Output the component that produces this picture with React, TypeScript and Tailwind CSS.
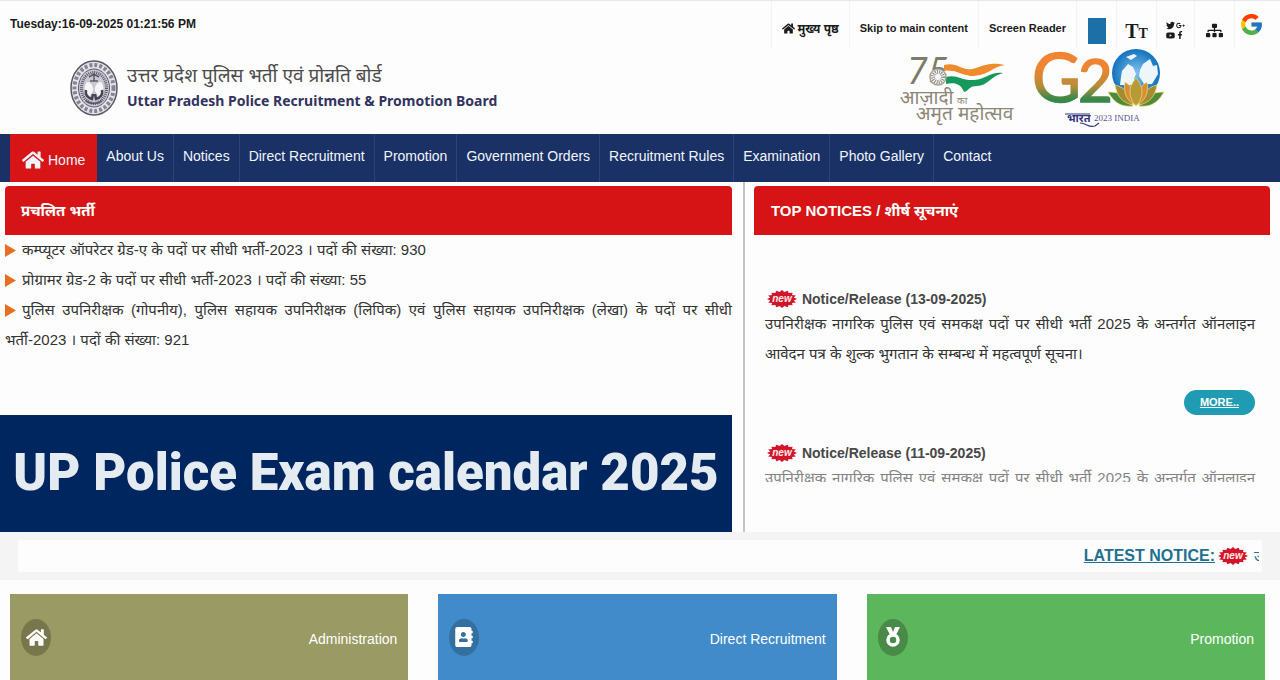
import { FaAddressBook, FaFacebookF, FaGooglePlusG, FaHome, FaSitemap, FaTwitter, FaYoutube } from "react-icons/fa";
import { FcGoogle } from "react-icons/fc";

const NAV_LINKS = [
  "About Us",
  "Notices",
  "Direct Recruitment",
  "Promotion",
  "Government Orders",
  "Recruitment Rules",
  "Examination",
  "Photo Gallery",
  "Contact",
];

const VACANCIES = [
  "कम्प्यूटर ऑपरेटर ग्रेड-ए के पदों पर सीधी भर्ती-2023 । पदों की संख्या: 930",
  "प्रोग्रामर ग्रेड-2 के पदों पर सीधी भर्ती-2023 । पदों की संख्या: 55",
  "पुलिस उपनिरीक्षक (गोपनीय), पुलिस सहायक उपनिरीक्षक (लिपिक) एवं पुलिस सहायक उपनिरीक्षक (लेखा) के पदों पर सीधी भर्ती-2023 । पदों की संख्या: 921",
];

function NewBadge() {
  // 16-point starburst
  const points = Array.from({ length: 32 }, (_, i) => {
    const r = i % 2 === 0 ? 1 : 0.8;
    const a = (i * Math.PI) / 16;
    return `${15 + 15 * r * Math.cos(a)},${9 + 9 * r * Math.sin(a)}`;
  }).join(" ");
  return (
    <svg viewBox="0 0 30 18" className="h-[18px] w-[30px] shrink-0">
      <polygon points={points} fill="#d3152b" />
      <text x="15" y="12" textAnchor="middle" fontSize="10" fontStyle="italic" fontWeight="700" fill="#ffe9e4">
        new
      </text>
    </svg>
  );
}

function Seal() {
  return (
    <svg viewBox="0 0 48 56" className="h-14 w-12 shrink-0" fill="none" stroke="#5b5a68">
      <ellipse cx="24" cy="28" rx="23" ry="27" fill="#e4e3ea" strokeWidth="1.5" />
      <ellipse cx="24" cy="28" rx="19.5" ry="23" strokeWidth="4" strokeDasharray="3 2" stroke="#858493" />
      <ellipse cx="24" cy="28" rx="15.5" ry="19" fill="#c9c8d2" strokeWidth="1" />
      <ellipse cx="24" cy="28" rx="12.5" ry="15.5" strokeWidth="3" strokeDasharray="1 1" />
      <path d="M24 13v8M19 17l5-3 5 3M20 21h8" strokeWidth="1.5" />
      <path d="M17 22c-4 5-3 11 3 14l3-5c1-4-2-9-6-9zM31 22c4 5 3 11-3 14l-3-5c-1-4 2-9 6-9z" fill="#f6f6fa" stroke="none" />
      <path d="M16 30c-1 5 2 8 6 9l1-5M32 30c1 5-2 8-6 9l-1-5" strokeWidth="2.5" stroke="#454453" />
      <path d="M16 41c5 3 11 3 16 0" strokeWidth="1.5" />
    </svg>
  );
}

function AmritMahotsavLogo() {
  return (
    <svg viewBox="0 0 120 72" className="h-[72px] w-[120px] overflow-visible" role="img" aria-label="आज़ादी का अमृत महोत्सव">
      <text x="7" y="28" fontFamily="Lato, sans-serif" fontSize="36" fontStyle="italic" fill="#7d7b69">75</text>
      <path d="M44 9c14-4 18 8 32 3s18-5 29-3c-14 2-15 10-31 11-13 0-17-7-30-5z" fill="#ef8b2c" />
      <path d="M44 15c13-2 17 5 30 5 13-1 17-8 28-6-12 3-15 9-28 10-13 0-17-6-30-4z" fill="#fafafa" />
      <path d="M46 21c11-3 16 4 28 3 13-1 17-9 29-7-12 3-16 13-26 13-9 0-8 5-13 6-3-8-9-10-18-8z" fill="#15985a" />
      <circle cx="38" cy="21" r="8" fill="#f7f7f5" stroke="#a5a398" strokeWidth="1.5" />
      <circle cx="38" cy="21" r="5" fill="none" stroke="#8f8d8c" strokeWidth="4" strokeDasharray="1 1" />
      <text x="0" y="48" fontSize="19" fill="#8d8778">आज़ादी</text>
      <text x="57" y="48" fontSize="10" fill="#8d8778">का</text>
      <text x="16" y="64" fontSize="19" fill="#8d8778">अमृत महोत्सव</text>
    </svg>
  );
}

function G20Logo() {
  return (
    <svg viewBox="0 0 132 82" className="h-[82px] w-[132px] overflow-visible" role="img" aria-label="G20 भारत 2023 INDIA">
      <defs>
        <linearGradient id="tricolour" gradientUnits="userSpaceOnUse" x1="0" y1="4" x2="0" y2="56">
          <stop offset="0.3" stopColor="#ef8432" />
          <stop offset="0.65" stopColor="#b98c38" />
          <stop offset="0.9" stopColor="#39884a" />
        </linearGradient>
        <radialGradient id="globe">
          <stop offset="0" stopColor="#7fc4ee" />
          <stop offset="1" stopColor="#1272bd" />
        </radialGradient>
      </defs>
      <g fontFamily="Lato, sans-serif" fill="url(#tricolour)" stroke="url(#tricolour)" strokeWidth="1.5">
        <text x="-2" y="54" fontSize="67">G</text>
        <text x="44" y="54" fontSize="60">2</text>
      </g>
      <circle cx="102" cy="25" r="24" fill="url(#globe)" />
      <path d="M88 23l6-7 5 3 3 7-2 5 4 6H86l1-8zM106 22l3-6 7-5 3 7 4-1 1 9-6 10h-8l-5-8zM92 9l8-3 3 2-6 4z" fill="#eef6fb" />
      <g stroke="#f3dc7e" strokeWidth="0.7">
        <path d="M74 44c11 0 19 3 25 14-11 1-18-2-25-14zM130 44c-11 0-19 3-25 14 11 1 18-2 25-14z" fill="#4f8a3a" />
        <path d="M81 37c9 2 15 8 18 20-10-2-16-8-18-20zM123 37c-9 2-15 8-18 20 10-2 16-8 18-20z" fill="#a38d34" />
        <path d="M91 34c8 5 11 12 10 23-8-4-12-12-10-23zM113 34c-8 5-11 12-10 23 8-4 12-12 10-23z" fill="#d98d34" />
        <path d="M102 30c8 9 8 19 0 28-8-9-8-19 0-28z" fill="#b59b36" />
      </g>
      <text x="33" y="74" fontSize="11" fontWeight="700" fill="#34347c">भारत</text>
      <path d="M31 66h25M46 75c7 0 8 5 15 3l4-3" fill="none" stroke="#34347c" strokeWidth="1.2" />
      <text x="60" y="73" fontFamily="Liberation Serif, serif" fontSize="9" fill="#55558e">2023 INDIA</text>
    </svg>
  );
}

function MedalIcon() {
  return (
    <svg viewBox="0 0 16 22" className="h-[22px] w-4">
      <path d="M1 1h5l2 5 2-5h5l-4 8H5z" fill="#fff" />
      <circle cx="8" cy="14" r="5" fill="none" stroke="#fff" strokeWidth="3.5" />
    </svg>
  );
}

const CARDS = [
  { label: "Administration", className: "bg-[#9a9a64]", badge: "bg-[#77764c]", icon: <FaHome size={21} /> },
  { label: "Direct Recruitment", className: "bg-[#418bca]", badge: "bg-[#33709f]", icon: <FaAddressBook size={20} /> },
  { label: "Promotion", className: "bg-[#5bb65c]", badge: "bg-[#4a8a48]", icon: <MedalIcon /> },
];

function TopBar() {
  return (
    <div className="flex h-12 items-start justify-between border-t border-gray-200 pl-[10px] pr-3 text-[12px] font-bold text-[#1b1b1b]">
      <time className="pt-[14px] leading-[18px]">Tuesday:16-09-2025 01:21:56 PM</time>
      <div className="flex h-full items-stretch [&>*]:border-l [&>*]:border-gray-100">
        <a href="#home" className="flex items-center gap-[3px] px-[10px] pt-2">
          <FaHome size={13} /> मुख्य पृष्ठ
        </a>
        <a href="#main" className="flex items-center px-[10px] pt-2 text-[11px]">Skip to main content</a>
        <a href="#reader" className="flex items-center px-[10px] pt-2 text-[11px]">Screen Reader</a>
        <div className="flex w-10 items-center justify-center pt-3">
          <button aria-label="Theme colour" className="h-[26px] w-[18px] bg-[#1b70a8]" />
        </div>
        <button className="w-10 pt-3 font-['Liberation_Serif',serif] leading-none" aria-label="Text size">
          <span className="text-[20px]">T</span>
          <span className="text-[14px]">T</span>
        </button>
        <a href="#social" aria-label="Social media" className="grid w-[38px] grid-cols-[9px_9px] content-center justify-center gap-px pt-3">
          <FaTwitter size={9} />
          <FaGooglePlusG size={9} />
          <FaYoutube size={9} />
          <FaFacebookF size={8} />
        </a>
        <a href="#sitemap" aria-label="Sitemap" className="flex w-10 items-center justify-center pt-3">
          <FaSitemap size={17} />
        </a>
        <a href="#translate" aria-label="Translate" className="flex w-[34px] items-center justify-center">
          <FcGoogle size={25} />
        </a>
      </div>
    </div>
  );
}

function Notice({ date, children }: { date: string; children: string }) {
  return (
    <article>
      <h3 className="flex items-center gap-[5px] pl-0.5 text-[14px] font-bold leading-[20px] text-[#484848]">
        <NewBadge /> Notice/Release ({date})
      </h3>
      <p className="text-justify text-[15px] leading-[30px]">{children}</p>
    </article>
  );
}

export default function App() {
  return (
    <div className="bg-[#fdfdfd] font-['Liberation_Sans','Noto_Sans_Devanagari','Noto_Sans',sans-serif] text-[#333]">
      <TopBar />

      <header className="flex h-[86px] items-start justify-between pl-[70px] pr-[114px]">
        <div className="flex items-center gap-[9px] pt-3">
          <Seal />
          <div className="font-['Noto_Sans',sans-serif]">
            <p className="text-[19px] leading-[26px] text-[#4c4c4c]">उत्तर प्रदेश पुलिस भर्ती एवं प्रोन्नति बोर्ड</p>
            <h1 className="text-[14px] font-bold leading-[26px] text-[#33335f]">
              Uttar Pradesh Police Recruitment &amp; Promotion Board
            </h1>
          </div>
        </div>
        <div className="flex items-start gap-[14px]">
          <div className="pt-2"><AmritMahotsavLogo /></div>
          <G20Logo />
        </div>
      </header>

      <nav className="flex h-12 bg-[#1a3166] pl-[10px] text-[14px] text-[#f1f5fb]">
        <a href="#home" className="flex items-center gap-1 bg-[#d71416] px-3 pt-1">
          <FaHome size={22} /> Home
        </a>
        {NAV_LINKS.map((label) => (
          <a key={label} href="#nav" className="flex items-center border-r border-[#2b4478] px-[9px] pb-1 last:border-r-0">
            {label}
          </a>
        ))}
      </nav>

      <main className="flex h-[350px]">
        <section className="flex w-[58.2%] flex-col border-r-2 border-[#c3c3c6] pr-[11px] pt-1">
          <h2 className="ml-[5px] rounded-t bg-[#d61415] px-4 text-[15px] font-bold leading-[49px] text-white">प्रचलित भर्ती</h2>
          <ul className="ml-[5px] text-justify text-[15px] leading-[30px]">
            {VACANCIES.map((text) => (
              <li key={text}>
                <svg viewBox="0 0 11 13" className="mr-[6px] inline-block h-[13px] w-[11px] align-[-2px]">
                  <path d="M0 0l11 6.500-11 6.500z" fill="#ea6d22" />
                </svg>
                {text}
              </li>
            ))}
          </ul>
          <div className="mt-auto flex h-[117px] items-center justify-center whitespace-nowrap bg-[#00265f] font-['Roboto',sans-serif] text-[51px] font-black text-[#e4ebf1]">
            UP Police Exam calendar 2025
          </div>
        </section>

        <section className="flex-1 pl-[9px] pr-[10px] pt-1">
          <h2 className="rounded-t bg-[#d61415] px-[17px] text-[15px] font-bold leading-[49px] text-white">
            TOP NOTICES / शीर्ष सूचनाएं
          </h2>
          <div className="mt-[54px] h-[193px] overflow-hidden pl-[11px] pr-[15px]">
            <Notice date="13-09-2025">
              उपनिरीक्षक नागरिक पुलिस एवं समकक्ष पदों पर सीधी भर्ती 2025 के अन्तर्गत ऑनलाइन आवेदन पत्र के शुल्क भुगतान के सम्बन्ध में महत्वपूर्ण सूचना।
            </Notice>
            <div className="mb-7 mt-[21px] flex justify-end">
              <a href="#more" className="rounded-full bg-[#1f9cb4] px-4 text-[11px] font-bold leading-[25px] text-white underline">
                MORE..
              </a>
            </div>
            <div className="[&_p]:opacity-60 [&_p]:[text-align-last:justify]">
              <Notice date="11-09-2025">
                उपनिरीक्षक नागरिक पुलिस एवं समकक्ष पदों पर सीधी भर्ती 2025 के अन्तर्गत ऑनलाइन
              </Notice>
            </div>
          </div>
        </section>
      </main>

      <div className="bg-[#f4f4f4] px-[18px] py-2">
        <div className="flex h-8 items-center justify-end gap-[3px] overflow-hidden bg-[#fdfdfd] pr-[3px]">
          <a href="#latest" className="text-[16px] font-bold text-[#22708f] underline">LATEST NOTICE:</a>
          <NewBadge />
          <span className="ml-[3px] w-[5px] overflow-hidden text-[15px] text-[#22708f]">उ</span>
        </div>
      </div>

      <div className="grid grid-cols-3 gap-[30px] pl-[10px] pr-[15px] pt-[14px]">
        {CARDS.map((card) => (
          <a key={card.label} href="#card" className={`flex h-[86px] items-center justify-between px-[11px] text-[14px] text-white ${card.className}`}>
            <span className={`flex h-[37px] w-[30px] items-center justify-center rounded-[50%] ${card.badge}`}>{card.icon}</span>
            <span className="pt-1">{card.label}</span>
          </a>
        ))}
      </div>
    </div>
  );
}
